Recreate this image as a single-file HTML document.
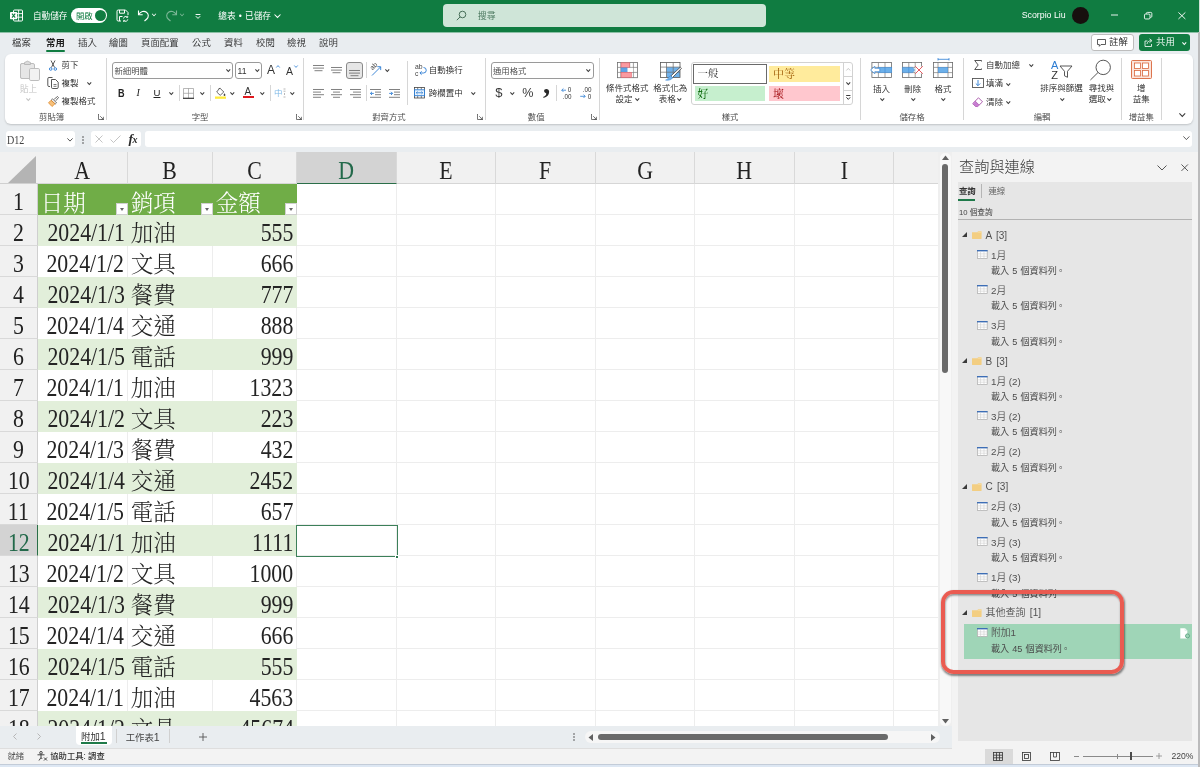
<!DOCTYPE html>
<html lang="zh-Hant"><head><meta charset="utf-8"><title>Excel</title>
<style>

*{box-sizing:border-box;margin:0;padding:0}
html,body{width:1200px;height:767px;overflow:hidden}
body{position:relative;background:#e9edf0;font-family:"Liberation Sans","Noto Sans CJK TC","Noto Sans CJK SC",sans-serif;font-size:9px;color:#242424;-webkit-font-smoothing:antialiased}
.a{position:absolute;white-space:nowrap}
.t{position:absolute;white-space:nowrap;line-height:12px;height:12px}
svg{position:absolute;overflow:visible}
#title{left:0;top:0;width:1200px;height:32px;background:#107c41;color:#fff}
#tabs{left:0;top:32px;width:1200px;height:22px}
#tabs .t{font-size:9.4px;color:#2e2e2e;top:5px;font-family:"Liberation Sans","Noto Sans CJK TC DemiLight","Noto Sans CJK TC","Noto Sans CJK SC",sans-serif}
#ribbon{left:5px;top:54px;width:1187.500px;height:70px;background:#fff;border-radius:6px;box-shadow:0 1px 2px rgba(0,0,0,.18)}
#rb .t{font-family:"Liberation Sans","Noto Sans CJK TC DemiLight","Noto Sans CJK TC","Noto Sans CJK SC",sans-serif}
#ribbon .gl{font-size:8.4px;color:#555}
.vsep{position:absolute;width:1px;background:#d6d6d6}
.chev{position:absolute;width:4px;height:4px;border-right:1px solid #444;border-bottom:1px solid #444;transform:rotate(45deg) scale(.8)}
#fbar{left:0;top:124px;width:1200px;height:28px}
.wbox{position:absolute;background:#fff;border-radius:3px}
#grid{left:0;top:152px;width:952px;height:574px;background:#fff;overflow:hidden}
.ch{position:absolute;top:0;height:32px;background:#f1f1f1;font-family:"Liberation Serif","Noto Serif CJK TC","Noto Serif CJK SC",serif;font-size:25.600px;line-height:38.300px;overflow:hidden;text-align:center;color:#222;border-right:1px solid #d9d9d9;border-bottom:1px solid #d6d6d6}
.rh{position:absolute;left:0;width:38px;height:31px;background:#f1f1f1;font-family:"Liberation Serif","Noto Serif CJK TC","Noto Serif CJK SC",serif;font-size:25.600px;line-height:36.100px;overflow:hidden;text-align:center;color:#222;border-bottom:1px solid #d9d9d9;border-right:1px solid #cfcfcf}
.c{position:absolute;height:31px;font-family:"Liberation Serif","Noto Serif CJK TC","Noto Serif CJK SC",serif;font-size:25.600px;line-height:36.100px;color:#242424;white-space:nowrap;overflow:hidden}
.band{background:#e2efda}
.hd{background:#70ad47;color:#fff;padding-top:1px}
.r{text-align:right;padding-right:4px}
.l{text-align:left;padding-left:2.800px}
.gv{position:absolute;top:32px;width:1px;height:542px;background:#ededed}
.gh{position:absolute;left:38px;height:1px;width:900px;background:#ededed}
.fb{position:absolute;width:12px;height:12px;background:#fff;border:1px solid #d0d0d0}
.fb:after{content:"";position:absolute;left:3px;top:4px;border-left:2.5px solid transparent;border-right:2.5px solid transparent;border-top:3px solid #666}
#pane{left:952px;top:152px;width:248px;height:597px;background:#f3f3f3}
#pin{position:absolute;left:6px;top:29.500px;width:234px;height:559px;background:#e6e6e6}
#pane .t{font-size:8.5px;color:#444}
#pane .nm{font-size:10px;color:#505050;font-family:"Liberation Sans","Noto Sans CJK TC DemiLight","Noto Sans CJK TC","Noto Sans CJK SC",sans-serif;line-height:14px;height:14px;word-spacing:1.500px}
#pane .sub{font-size:9.100px;color:#484848;word-spacing:.6px}
#sheetbar{left:0;top:726px;width:952px;height:22.500px;background:#e9edf0;border-bottom:1px solid #dedede}
#status{left:0;top:748.500px;width:1200px;height:15.500px;background:#f3f3f3}
#status .t{font-size:8.3px;color:#555}
#bstrip{left:0;top:764px;width:1200px;height:3px;background:#dde7f3;border-top:1px solid #c3ccd8}

.n{display:inline-block;transform:scaleX(.853);transform-origin:50% 50%}
.nr{transform-origin:100% 50%;position:absolute;right:3.400px;top:0}
.k{font-size:22.500px;line-height:37px;font-weight:300}
.wb{border-right:1px solid #ededed}
.dot{position:relative;top:-1.100px;left:.1px;font-size:80%}

</style></head>
<body>
<div id="wrap" style="position:absolute;left:0;top:0;width:1200px;height:767px;will-change:transform">
<div id="title" class="a">
<svg style="left:10px;top:9px" width="13" height="13" viewBox="0 0 13 13"><rect x="3.5" y="1" width="9" height="11" rx="1" fill="none" stroke="#fff" stroke-width="1"/><path d="M3.5 4.6h9M3.5 8.2h9M8.6 1v11" stroke="#fff" stroke-width=".9" fill="none"/><rect x="0" y="3" width="7.2" height="7.2" rx=".8" fill="#fff"/><path d="M2 4.6l3.2 4M5.2 4.6l-3.2 4" stroke="#107c41" stroke-width="1.1"/></svg>
<div class="t" style="left:33px;top:10px;font-size:8.6px">自動儲存</div>
<div class="a" style="left:71px;top:8px;width:36px;height:15px;border-radius:8px;background:#fff"></div><div class="t" style="left:76px;top:10px;font-size:8.4px;color:#107c41">開啟</div><div class="a" style="left:95px;top:10px;width:11px;height:11px;border-radius:6px;background:#107c41"></div>
<svg style="left:116px;top:9px" width="13" height="13" viewBox="0 0 13 13" fill="none" stroke="#fff" stroke-width="1"><path d="M5 12H2.2a1.2 1.2 0 0 1-1.2-1.2V2.2A1.2 1.2 0 0 1 2.200 1h7.3L12 3.500V6"/><path d="M3.500 1v3.200h5V1"/><path d="M3.500 12V7.500h3"/><path d="M7.500 9.500a2.300 2.300 0 0 1 4-1.300M11.800 10.300a2.300 2.300 0 0 1-4 1.300" stroke-width=".9"/><path d="M11.700 6.800v1.600h-1.600M7.600 13v-1.600h1.600" stroke-width=".8"/></svg>
<svg style="left:137px;top:9px" width="13" height="13" viewBox="0 0 13 13" fill="none" stroke="#fff" stroke-width="1.1"><path d="M1.500 1.500v4.200h4.200"/><path d="M1.800 5.500C3.500 2.500 7 1.500 9.500 3.200c2.400 1.700 2.300 5 .3 6.800L7.500 12"/></svg>
<div class="chev" style="left:152px;top:12px;border-color:#fff"></div>
<svg style="left:165px;top:9px;opacity:.45" width="13" height="13" viewBox="0 0 13 13" fill="none" stroke="#fff" stroke-width="1.1"><path d="M11.500 1.500v4.200H7.300"/><path d="M11.200 5.500C9.500 2.500 6 1.500 3.500 3.200c-2.400 1.700-2.300 5-.3 6.800L5.500 12"/></svg>
<div class="chev" style="left:180px;top:12px;border-color:#fff;opacity:.45"></div>
<svg style="left:194.500px;top:13.500px" width="6" height="5" viewBox="0 0 6 5" fill="none" stroke="#fff" stroke-width=".95"><path d="M.6.500h4.800M.8 2.200L3 4.400l2.200-2.200"/></svg>
<div class="t" style="left:218.300px;top:10px;font-size:8.700px;word-spacing:.7px">總表 • 已儲存</div>
<svg style="left:273.500px;top:13.800px" width="7" height="4.200" viewBox="0 0 7 4.200" fill="none" stroke="#fff" stroke-width="1.050"><path d="M.5.500L3.500 3.500 6.500.500"/></svg>
<div class="a" style="left:443px;top:4px;width:323px;height:23px;border-radius:4px;background:#cfe5d8"></div>
<svg style="left:456px;top:10px" width="11" height="11" viewBox="0 0 11 11" fill="none" stroke="#49705a" stroke-width="1"><circle cx="6.500" cy="4.500" r="3.300"/><path d="M4.200 6.800L.8 10.200"/></svg>
<div class="t" style="left:478px;top:10px;font-size:8.8px;color:#4d7a61">搜尋</div>
<div class="t" style="left:1021.700px;top:9.200px;font-size:8.800px;font-family:'Liberation Sans',sans-serif">Scorpio Liu</div>
<div class="a" style="left:1071.700px;top:6.800px;width:17px;height:17px;border-radius:9px;background:#17100e"></div>
<svg style="left:1110.500px;top:14.300px" width="7" height="2" viewBox="0 0 7 2"><path d="M0 1h7" stroke="#fff" stroke-width=".9"/></svg>
<svg style="left:1143.700px;top:12px" width="8.300" height="7.400" viewBox="0 0 9 9" preserveAspectRatio="none" fill="none" stroke="#fff" stroke-width="1"><rect x=".5" y="2.500" width="6" height="6" rx="1.200"/><path d="M2.500 2.300V1.700A1.200 1.200 0 0 1 3.700.500h3.600A1.200 1.200 0 0 1 8.500 1.700v3.600a1.200 1.200 0 0 1-1.200 1.200h-.6"/></svg>
<svg style="left:1177.500px;top:12px" width="7.800" height="7.400" viewBox="0 0 9 9" preserveAspectRatio="none" fill="none" stroke="#fff" stroke-width="1.100"><path d="M.5.500l8 8M8.500.500l-8 8"/></svg>
</div>
<div class="a" style="left:0;top:32px;width:1200px;height:1px;background:#8cc0a6"></div>
<div id="tabs" class="a">
<div class="t" style="left:12px;">檔案</div><div class="t" style="left:46px;font-weight:700;color:#1a1a1a;font-family:'Liberation Sans','Noto Sans CJK TC','Noto Sans CJK SC',sans-serif;">常用</div><div class="t" style="left:78px;">插入</div><div class="t" style="left:109px;">繪圖</div><div class="t" style="left:141px;">頁面配置</div><div class="t" style="left:192px;">公式</div><div class="t" style="left:224px;">資料</div><div class="t" style="left:256px;">校閱</div><div class="t" style="left:287px;">檢視</div><div class="t" style="left:319px;">說明</div>
<div class="a" style="left:46px;top:18px;width:19px;height:2px;background:#107c41;border-radius:1px"></div>
<div class="a" style="left:1091px;top:2px;width:43px;height:17px;border:1px solid #bdbdbd;border-radius:3px;background:#fff"></div><svg style="left:1097px;top:7px" width="9" height="8" viewBox="0 0 9 8" fill="none" stroke="#333" stroke-width=".8"><path d="M.5.500h8v5H4L2.300 7.300V5.500H.5z"/></svg><div class="t" style="left:1109px;top:4px;color:#222">註解</div>
<div class="a" style="left:1139px;top:2px;width:51px;height:17px;border-radius:3px;background:#107c41"></div><svg style="left:1144px;top:6px" width="9" height="9" viewBox="0 0 9 9" fill="none" stroke="#fff" stroke-width=".8"><path d="M3.500 3H1v5.500h6.500V6"/><path d="M3 6c.3-2 1.700-3.200 4-3.300M5.500.800L8 2.700 5.500 4.600"/></svg><div class="t" style="left:1156px;top:4px;color:#fff">共用</div><svg style="left:1181.700px;top:9.500px" width="4.600" height="3" viewBox="0 0 4.600 3" fill="none" stroke="#fff" stroke-width="1.050"><path d="M.4.400L2.300 2.500 4.200.400"/></svg>
</div>
<div id="ribbon" class="a"></div>
<div id="rb" class="a" style="left:0;top:0">
<svg style="left:20px;top:60px;" width="20" height="21" viewBox="0 0 20 21"><path d="M3.500 3.500H2a1.500 1.500 0 0 0-1.500 1.500v12A1.500 1.500 0 0 0 2 18.500h6" fill="#e6e6e6" stroke="#bcbcbc"/><rect x=".5" y="3.500" width="14" height="15" rx="1.500" fill="#e6e6e6" stroke="#bdbdbd"/><path d="M4.500 4.500V3a1 1 0 0 1 1-1h.7a1.400 1.400 0 0 1 2.600 0h.7a1 1 0 0 1 1 1v1.500z" fill="#dcdcdc" stroke="#b8b8b8"/><rect x="9.500" y="8.500" width="10" height="12" rx="1.300" fill="#f2f2f2" stroke="#bdbdbd"/></svg><div class="t" style="left:20px;top:82.5px;font-size:8.6px;color:#c2c2c2;">貼上</div><svg style="left:26.4px;top:98.15px" width="4.6" height="2.9" viewBox="0 0 4.6 2.9" fill="none" stroke="#c2c2c2" stroke-width="1.05"><path d="M.4.400L2.3 2.5L4.2 .4"/></svg><svg style="left:49px;top:60px;" width="8" height="11" viewBox="0 0 8 11"><path d="M2 .5l3.600 7M6 .5L2.400 7.500" stroke="#444" stroke-width=".9" fill="none"/><circle cx="1.700" cy="9" r="1.300" fill="none" stroke="#2b7cd3" stroke-width=".9"/><circle cx="6.300" cy="9" r="1.300" fill="none" stroke="#2b7cd3" stroke-width=".9"/></svg><div class="t" style="left:61.6px;top:58.7px;font-size:8.5px;color:#262626;">剪下</div><svg style="left:47px;top:77px;" width="12" height="12" viewBox="0 0 12 12"><path d="M3 9.500H2a1.200 1.200 0 0 1-1.200-1.200V1.700A1.200 1.200 0 0 1 2 .5h3.500" fill="none" stroke="#444" stroke-width=".9"/><path d="M4.500 2.500h4l2.700 2.700v5.100a1.200 1.200 0 0 1-1.200 1.200H5.700a1.200 1.200 0 0 1-1.200-1.200z" fill="#fff" stroke="#444" stroke-width=".9"/><path d="M6.500 7.500h3M6.500 9.300h3" stroke="#444" stroke-width=".7"/></svg><div class="t" style="left:61.6px;top:77px;font-size:8.5px;color:#262626;">複製</div><svg style="left:86.7px;top:82.05px" width="4.6" height="2.9" viewBox="0 0 4.6 2.9" fill="none" stroke="#3a3a3a" stroke-width="1.05"><path d="M.4.400L2.3 2.5L4.2 .4"/></svg><svg style="left:48px;top:96px;" width="11" height="11" viewBox="0 0 11 11"><path d="M6.200 3.200L9.500.5l1 1-2.700 3.300" fill="#fff" stroke="#444" stroke-width=".8"/><path d="M4.500 2.800l4 4-1.300 1.300-4-4z" fill="#fff" stroke="#444" stroke-width=".8"/><path d="M3 4.300L.5 6.800 4 10.500l3-2.800z" fill="#f6c07a" stroke="#e08a2c" stroke-width=".8"/></svg><div class="t" style="left:61.6px;top:95.3px;font-size:8.5px;color:#262626;">複製格式</div><div class="t" style="left:11.6px;width:80px;text-align:center;top:110.7px;font-size:8.4px;color:#444;">剪貼簿</div><svg style="left:98px;top:114px;" width="6" height="6" viewBox="0 0 6 6"><path d="M.5 0v5.500H6M.5.500H0M2.200 2.200l3 3M5.400 2.800v2.600H2.800" fill="none" stroke="#555" stroke-width=".8"/></svg><div class="vsep" style="left:106px;top:57.5px;height:62px;background:#d6d6d6"></div><div class="a" style="left:112.300px;top:62px;width:120.400px;height:16.700px;border:1px solid #9a9a9a;border-radius:3px;background:#fff"></div><div class="t" style="left:114.5px;top:64.5px;font-size:8.4px;color:#444;">新細明體</div><svg style="left:225.7px;top:69.35px" width="4.6" height="2.9" viewBox="0 0 4.6 2.9" fill="none" stroke="#3a3a3a" stroke-width="1.05"><path d="M.4.400L2.3 2.5L4.2 .4"/></svg><div class="a" style="left:235px;top:62px;width:27px;height:16.700px;border:1px solid #9a9a9a;border-radius:3px;background:#fff"></div><div class="t" style="left:237.5px;top:64.5px;font-size:8.6px;color:#333;">11</div><svg style="left:254.7px;top:69.35px" width="4.6" height="2.9" viewBox="0 0 4.6 2.9" fill="none" stroke="#3a3a3a" stroke-width="1.05"><path d="M.4.400L2.3 2.5L4.2 .4"/></svg><div class="t" style="left:267px;top:64px;font-size:12px;color:#333;">A</div><svg style="left:275.5px;top:64.5px;" width="4" height="3" viewBox="0 0 4 3"><path d="M.3 2.500L2 .6l1.700 1.900" fill="none" stroke="#2b7cd3" stroke-width=".8"/></svg><div class="t" style="left:286px;top:64.6px;font-size:10.5px;color:#333;">A</div><svg style="left:293.5px;top:64.5px;" width="4" height="3" viewBox="0 0 4 3"><path d="M.3.500L2 2.400 3.700.500" fill="none" stroke="#2b7cd3" stroke-width=".8"/></svg><div class="t" style="left:118px;top:86.7px;font-size:10.6px;color:#222;font-weight:700;font-family:'Liberation Sans',sans-serif"><span style="display:inline-block;transform:scaleX(.86);transform-origin:0 50%">B</span></div><div class="t" style="left:136.5px;top:87px;font-size:10px;color:#222;font-style:italic;font-family:'Liberation Serif',serif">I</div><div class="t" style="left:153.5px;top:87px;font-size:9.6px;color:#222;text-decoration:underline">U</div><svg style="left:168.7px;top:92.05px" width="4.6" height="2.9" viewBox="0 0 4.6 2.9" fill="none" stroke="#3a3a3a" stroke-width="1.05"><path d="M.4.400L2.3 2.5L4.2 .4"/></svg><div class="vsep" style="left:178.5px;top:85px;height:16px;background:#d6d6d6"></div><svg style="left:183px;top:87.5px;" width="11" height="11" viewBox="0 0 11 11"><path d="M.5 10V.5h10V10M5.500 .5v9.500M.5 5.300h10" fill="none" stroke="#9a9a9a" stroke-width=".7"/><path d="M0 10.300h11" stroke="#333" stroke-width="1.200"/></svg><svg style="left:199.7px;top:92.05px" width="4.6" height="2.9" viewBox="0 0 4.6 2.9" fill="none" stroke="#3a3a3a" stroke-width="1.05"><path d="M.4.400L2.3 2.5L4.2 .4"/></svg><div class="vsep" style="left:209.5px;top:85px;height:16px;background:#d6d6d6"></div><svg style="left:214.5px;top:86.5px;" width="11" height="12" viewBox="0 0 11 12"><path d="M4.800 1l4 4-3.600 3.300L1.700 5z" fill="#fff" stroke="#444" stroke-width=".8"/><path d="M3.500 2.200l1.300-1.300" stroke="#444" stroke-width=".8"/><path d="M9.500 6.200c.6.900.9 1.400.9 1.900a.9.900 0 0 1-1.800 0c0-.5.300-1 .9-1.900z" fill="#444"/><rect x="0" y="9.500" width="11" height="2.300" fill="#ffeb3b"/></svg><svg style="left:230.2px;top:92.05px" width="4.6" height="2.9" viewBox="0 0 4.6 2.9" fill="none" stroke="#3a3a3a" stroke-width="1.05"><path d="M.4.400L2.3 2.5L4.2 .4"/></svg><div class="t" style="left:244.5px;top:85.5px;font-size:10px;color:#333;">A</div><div class="a" style="left:243px;top:96px;width:11px;height:2.300px;background:#e0191e"></div><svg style="left:259.7px;top:92.05px" width="4.6" height="2.9" viewBox="0 0 4.6 2.9" fill="none" stroke="#3a3a3a" stroke-width="1.05"><path d="M.4.400L2.3 2.5L4.2 .4"/></svg><div class="vsep" style="left:269.5px;top:85px;height:16px;background:#d6d6d6"></div><div class="t" style="left:274px;top:87px;font-size:8.5px;color:#79b6e6;">中</div><svg style="left:283px;top:87.5px;" width="3" height="10" viewBox="0 0 3 10"><path d="M.5 1h2M.5 3.200h2M1.500 5v2M.5 9h2" stroke="#9a9a9a" stroke-width=".7"/></svg><svg style="left:290.2px;top:92.05px" width="4.6" height="2.9" viewBox="0 0 4.6 2.9" fill="none" stroke="#3a3a3a" stroke-width="1.05"><path d="M.4.400L2.3 2.5L4.2 .4"/></svg><div class="t" style="left:160px;width:80px;text-align:center;top:110.7px;font-size:8.4px;color:#444;">字型</div><svg style="left:296px;top:114px;" width="6" height="6" viewBox="0 0 6 6"><path d="M.5 0v5.500H6M.5.500H0M2.200 2.200l3 3M5.400 2.800v2.600H2.800" fill="none" stroke="#555" stroke-width=".8"/></svg><div class="vsep" style="left:303px;top:57.5px;height:62px;background:#d6d6d6"></div><svg style="left:313px;top:64.5px;" width="11" height="7.8" viewBox="0 0 11 7.8"><path d="M0 0.5h11" stroke="#6a6a6a" stroke-width=".85"/><path d="M0 3.1h11" stroke="#6a6a6a" stroke-width=".85"/><path d="M1.5 5.7h8" stroke="#6a6a6a" stroke-width=".85"/></svg><svg style="left:331px;top:67px;" width="11" height="7.8" viewBox="0 0 11 7.8"><path d="M0 0.5h11" stroke="#6a6a6a" stroke-width=".85"/><path d="M0 3.1h11" stroke="#6a6a6a" stroke-width=".85"/><path d="M1.5 5.7h8" stroke="#6a6a6a" stroke-width=".85"/></svg><div class="a" style="left:346px;top:62px;width:17px;height:17px;border:1px solid #8a8a8a;border-radius:3px;background:#e6e6e6"></div><svg style="left:349px;top:69.5px;" width="11" height="7.8" viewBox="0 0 11 7.8"><path d="M0 0.5h11" stroke="#6a6a6a" stroke-width=".85"/><path d="M0 3.1h11" stroke="#6a6a6a" stroke-width=".85"/><path d="M1.5 5.7h8" stroke="#6a6a6a" stroke-width=".85"/></svg><div class="vsep" style="left:365.5px;top:62px;height:16px;background:#d6d6d6"></div><svg style="left:370px;top:63.5px;" width="12" height="12" viewBox="0 0 12 12"><text x="0" y="0" font-size="6.800" font-family="Liberation Sans" fill="#444" transform="translate(2.500 6.500) rotate(-45)">ab</text><path d="M2 11.500L10.500 3" stroke="#2b7cd3" stroke-width=".9" fill="none"/><path d="M7.300 2.700h3.400v3.400" stroke="#2b7cd3" stroke-width=".9" fill="none"/></svg><svg style="left:385.2px;top:69.05px" width="4.6" height="2.9" viewBox="0 0 4.6 2.9" fill="none" stroke="#3a3a3a" stroke-width="1.05"><path d="M.4.400L2.3 2.5L4.2 .4"/></svg><svg style="left:313px;top:88.5px;" width="11" height="10.4" viewBox="0 0 11 10.4"><path d="M0 0.5h11" stroke="#6a6a6a" stroke-width=".85"/><path d="M0 3.1h8" stroke="#6a6a6a" stroke-width=".85"/><path d="M0 5.7h11" stroke="#6a6a6a" stroke-width=".85"/><path d="M0 8.3h8" stroke="#6a6a6a" stroke-width=".85"/></svg><svg style="left:331px;top:88.5px;" width="11" height="10.4" viewBox="0 0 11 10.4"><path d="M0 0.5h11" stroke="#6a6a6a" stroke-width=".85"/><path d="M2 3.1h7" stroke="#6a6a6a" stroke-width=".85"/><path d="M0 5.7h11" stroke="#6a6a6a" stroke-width=".85"/><path d="M2 8.3h7" stroke="#6a6a6a" stroke-width=".85"/></svg><svg style="left:349.5px;top:88.5px;" width="11" height="10.4" viewBox="0 0 11 10.4"><path d="M0 0.5h11" stroke="#6a6a6a" stroke-width=".85"/><path d="M3 3.1h8" stroke="#6a6a6a" stroke-width=".85"/><path d="M0 5.7h11" stroke="#6a6a6a" stroke-width=".85"/><path d="M3 8.3h8" stroke="#6a6a6a" stroke-width=".85"/></svg><div class="vsep" style="left:365.5px;top:85px;height:16px;background:#d6d6d6"></div><svg style="left:370px;top:88.5px;" width="11" height="9" viewBox="0 0 11 9"><path d="M0 .5h11M5 3.100h6M5 5.700h6M0 8.300h11" stroke="#6a6a6a" stroke-width=".85"/><path d="M3.800 4.400H.5M2 2.800L.4 4.400 2 6" stroke="#2b7cd3" stroke-width=".9" fill="none"/></svg><svg style="left:388.5px;top:88.5px;" width="11" height="9" viewBox="0 0 11 9"><path d="M0 .5h11M5 3.100h6M5 5.700h6M0 8.300h11" stroke="#6a6a6a" stroke-width=".85"/><path d="M.2 4.400h3.300M2 2.800l1.600 1.600L2 6" stroke="#2b7cd3" stroke-width=".9" fill="none"/></svg><div class="vsep" style="left:406.5px;top:61px;height:43.5px;background:#d6d6d6"></div><svg style="left:415px;top:64px;" width="11" height="12" viewBox="0 0 11 12"><text x="0" y="5" font-size="6.800" font-family="Liberation Sans" fill="#444">ab</text><text x="0" y="11.500" font-size="6.800" font-family="Liberation Sans" fill="#444">c</text><path d="M8.500 3.500a2.600 2.600 0 0 1 0 5.500H5M6.600 7.300L4.900 9l1.700 1.700" stroke="#2b7cd3" stroke-width=".9" fill="none"/></svg><div class="t" style="left:428.7px;top:64px;font-size:8.5px;color:#262626;">自動換行</div><svg style="left:414px;top:86.7px;" width="11" height="11.5" viewBox="0 0 11 11.5"><rect x=".5" y=".5" width="10" height="10.500" fill="#fff" stroke="#444" stroke-width=".8"/><path d="M3.700 .5v2.300M7.300 .5v2.300M3.700 8.700V11M7.300 8.700V11" stroke="#444" stroke-width=".7"/><rect x=".5" y="2.800" width="10" height="5.900" fill="#eaf3fc" stroke="#2b7cd3" stroke-width=".9"/><path d="M2.300 5.750h6.400M3.600 4.500L2.300 5.750l1.300 1.250M7.400 4.500l1.300 1.250-1.300 1.250" stroke="#2b7cd3" stroke-width=".8" fill="none"/></svg><div class="t" style="left:428.7px;top:86.5px;font-size:8.5px;color:#262626;">跨欄置中</div><svg style="left:470.7px;top:92.05px" width="4.6" height="2.9" viewBox="0 0 4.6 2.9" fill="none" stroke="#3a3a3a" stroke-width="1.05"><path d="M.4.400L2.3 2.5L4.2 .4"/></svg><div class="t" style="left:349px;width:80px;text-align:center;top:110.7px;font-size:8.4px;color:#444;">對齊方式</div><svg style="left:476.5px;top:114px;" width="6" height="6" viewBox="0 0 6 6"><path d="M.5 0v5.500H6M.5.500H0M2.200 2.200l3 3M5.400 2.800v2.600H2.800" fill="none" stroke="#555" stroke-width=".8"/></svg><div class="vsep" style="left:484.5px;top:57.5px;height:62px;background:#d6d6d6"></div><div class="a" style="left:490.500px;top:62px;width:103.300px;height:16.700px;border:1px solid #9a9a9a;border-radius:3px;background:#fff"></div><div class="t" style="left:493px;top:64.5px;font-size:8.4px;color:#444;">通用格式</div><svg style="left:586.4px;top:69.35px" width="4.6" height="2.9" viewBox="0 0 4.6 2.9" fill="none" stroke="#3a3a3a" stroke-width="1.05"><path d="M.4.400L2.3 2.5L4.2 .4"/></svg><div class="t" style="left:495.3px;top:86.5px;font-size:13px;color:#3a3a3a;">$</div><svg style="left:510.2px;top:92.05px" width="4.6" height="2.9" viewBox="0 0 4.6 2.9" fill="none" stroke="#3a3a3a" stroke-width="1.05"><path d="M.4.400L2.3 2.5L4.2 .4"/></svg><div class="t" style="left:522.3px;top:86.5px;font-size:12.6px;color:#3a3a3a;">%</div><svg style="left:543px;top:86px;" width="8" height="13" viewBox="0 0 8 13"><text x="0" y="6.800" font-size="29" font-weight="700" font-family="Liberation Serif" fill="#2a2a2a">,</text></svg><div class="vsep" style="left:556px;top:85px;height:16px;background:#d6d6d6"></div><svg style="left:561px;top:86.5px;" width="12" height="12" viewBox="0 0 12 12"><text x="6.800" y="5.300" font-size="6.300" font-family="Liberation Sans" fill="#333">0</text><text x="1.800" y="11.500" font-size="6.300" font-family="Liberation Sans" fill="#333">.00</text><path d="M5 3.200H.8M2.400 1.500L.7 3.200l1.700 1.700" stroke="#2b7cd3" stroke-width=".8" fill="none"/></svg><svg style="left:579.5px;top:86.5px;" width="12" height="12" viewBox="0 0 12 12"><text x="2.700" y="5.300" font-size="6.300" font-family="Liberation Sans" fill="#333">.00</text><text x="7.700" y="11.500" font-size="6.300" font-family="Liberation Sans" fill="#333">0</text><path d="M.2 9.300h5M3.500 7.600l1.700 1.700-1.700 1.700" stroke="#2b7cd3" stroke-width=".8" fill="none"/></svg><div class="t" style="left:496.2px;width:80px;text-align:center;top:110.7px;font-size:8.4px;color:#444;">數值</div><svg style="left:591px;top:114px;" width="6" height="6" viewBox="0 0 6 6"><path d="M.5 0v5.500H6M.5.500H0M2.200 2.200l3 3M5.400 2.800v2.600H2.800" fill="none" stroke="#555" stroke-width=".8"/></svg><div class="vsep" style="left:599px;top:57.5px;height:62px;background:#d6d6d6"></div><svg style="left:617.3px;top:62px;" width="21" height="16" viewBox="0 0 21 16"><rect x=".4" y=".4" width="20" height="15.300" fill="#fff" stroke="#6e6e6e" stroke-width=".8"/><path d="M3.800 .4v15.300M12.700 .4v15.300M16.400 .4v15.300M.4 5.400h20M.4 10.400h20" stroke="#7a7a7a" stroke-width=".7" fill="none"/><rect x="4.100" y=".8" width="8.600" height="4.600" fill="#fb9aa0" stroke="#e4606a" stroke-width=".6"/><rect x="4.100" y="5.900" width="6.200" height="4" fill="#5fa4e6" stroke="#3f8ad6" stroke-width=".5"/><rect x="10.600" y="5.900" width="5.600" height="4" fill="#fff"/><rect x="4.100" y="10.400" width="10.200" height="4.900" fill="#fb9aa0" stroke="#e4606a" stroke-width=".6"/></svg><div class="t" style="left:587.3px;width:80px;text-align:center;top:82px;font-size:8.5px;color:#262626;">條件式格式</div><div class="t" style="left:615.5px;top:92.7px;font-size:8.5px;color:#262626;">設定</div><svg style="left:634.7px;top:97.85px" width="4.6" height="2.9" viewBox="0 0 4.6 2.9" fill="none" stroke="#3a3a3a" stroke-width="1.05"><path d="M.4.400L2.3 2.5L4.2 .4"/></svg><svg style="left:660px;top:62.3px;" width="22" height="19" viewBox="0 0 22 19"><rect x="6.300" y="5.100" width="13.700" height="10.300" fill="#6fb1ea"/><rect x=".4" y=".4" width="19.600" height="15" fill="none" stroke="#555" stroke-width=".8"/><path d="M6.500 .4v15M13.200 .4v15M.4 5.100h19.600M.4 10.200h19.600" stroke="#6a6a6a" stroke-width=".7" fill="none"/><path d="M20.300 5.200l1.200 1.100-9 9.300-1.700-1.600z" fill="#fff" stroke="#444" stroke-width=".8"/><path d="M10.600 13.800l2 2c-.8 1.800-3.600 2.800-7 2.300 1.800-.6 2.700-1.500 3.300-3.200z" fill="#6fb1ea" stroke="#3f8ad6" stroke-width=".6"/></svg><div class="t" style="left:630.2px;width:80px;text-align:center;top:82px;font-size:8.5px;color:#262626;">格式化為</div><div class="t" style="left:658.7px;top:92.7px;font-size:8.5px;color:#262626;">表格</div><svg style="left:677.2px;top:97.85px" width="4.6" height="2.9" viewBox="0 0 4.6 2.9" fill="none" stroke="#3a3a3a" stroke-width="1.05"><path d="M.4.400L2.3 2.5L4.2 .4"/></svg><div class="a" style="left:691px;top:62px;width:161.500px;height:43.300px;border:1px solid #d2d2d2;border-radius:3px;background:#fff"></div><div class="a" style="left:692.500px;top:64.200px;width:74.300px;height:19.600px;border:1.400px solid #6a6a6a;background:#fff"></div><div class="t" style="left:697.5px;top:67.5px;font-size:10.4px;color:#333;font-family:'Liberation Serif','Noto Serif CJK TC','Noto Serif CJK SC',serif">一般</div><div class="a" style="left:769px;top:66.200px;width:71px;height:15.600px;background:#ffeb9c"></div><div class="t" style="left:773px;top:67.5px;font-size:11px;color:#9c5700;font-family:'Liberation Serif','Noto Serif CJK TC','Noto Serif CJK SC',serif">中等</div><div class="a" style="left:694.500px;top:86px;width:70.500px;height:15.400px;background:#c6efce"></div><div class="t" style="left:697.5px;top:87.5px;font-size:11px;color:#006100;font-family:'Liberation Serif','Noto Serif CJK TC','Noto Serif CJK SC',serif">好</div><div class="a" style="left:769px;top:86px;width:71px;height:15.400px;background:#ffc7ce"></div><div class="t" style="left:773px;top:87.5px;font-size:11px;color:#9c0006;font-family:'Liberation Serif','Noto Serif CJK TC','Noto Serif CJK SC',serif">壞</div><div class="vsep" style="left:843px;top:62.5px;height:42.5px;background:#d2d2d2"></div><div class="a" style="left:843px;top:76px;width:9px;height:1px;background:#d2d2d2"></div><div class="a" style="left:843px;top:90px;width:9px;height:1px;background:#d2d2d2"></div><svg style="left:845.7px;top:68px;" width="4.6" height="2.9" viewBox="0 0 4.6 2.9"><path d="M.4 2.500L2.300.400l1.900 2.100" fill="none" stroke="#c4c4c4" stroke-width=".9"/></svg><svg style="left:845.7px;top:81.85px" width="4.6" height="2.9" viewBox="0 0 4.6 2.9" fill="none" stroke="#3a3a3a" stroke-width="1.05"><path d="M.4.400L2.3 2.5L4.2 .4"/></svg><svg style="left:845.7px;top:94.8px;" width="4.6" height="5" viewBox="0 0 4.6 5"><path d="M.2.500h4.200M.4 2.300L2.300 4.400l1.900-2.100" fill="none" stroke="#3a3a3a" stroke-width="1"/></svg><div class="t" style="left:690px;width:80px;text-align:center;top:110.7px;font-size:8.4px;color:#444;">樣式</div><div class="vsep" style="left:860px;top:57.5px;height:62px;background:#d6d6d6"></div><svg style="left:868.5px;top:62px;" width="23" height="16" viewBox="0 0 23 16"><rect x="2.900" y=".4" width="19.600" height="15.200" fill="#fff" stroke="#6a6a6a" stroke-width=".8"/><path d="M9.400 .4v15.200M16 .4v15.200M2.900 5.400h19.600M2.900 10.600h19.600" stroke="#7a7a7a" stroke-width=".7" fill="none"/><rect x="9" y="5.400" width="13.800" height="5.200" fill="#6cb0ea" stroke="#3f8ad6" stroke-width=".5"/><path d="M16 5.400v5.200" stroke="#3f8ad6" stroke-width=".6"/><path d="M5.800 4.300L1.600 8l4.200 3.700V9.700h5V6.300h-5z" fill="#fff" stroke="#3f8ad6" stroke-width=".8" stroke-linejoin="round"/></svg><div class="t" style="left:841.6px;width:80px;text-align:center;top:82.7px;font-size:8.5px;color:#262626;">插入</div><svg style="left:879.7px;top:97.95px" width="4.6" height="2.9" viewBox="0 0 4.6 2.9" fill="none" stroke="#3a3a3a" stroke-width="1.05"><path d="M.4.400L2.3 2.5L4.2 .4"/></svg><svg style="left:902.2px;top:62px;" width="22" height="16" viewBox="0 0 22 16"><rect x=".4" y=".4" width="19.200" height="15.200" fill="#fff" stroke="#6a6a6a" stroke-width=".8"/><path d="M6.800 .4v15.200M13.200 .4v15.200M.4 5.400h19.200M.4 10.600h19.200" stroke="#7a7a7a" stroke-width=".7" fill="none"/><rect x="13.400" y="4.500" width="7" height="7" fill="#fff"/><path d="M.4 5.400h10.200l2 2.600-2 2.600H.4z" fill="#6cb0ea" stroke="#3f8ad6" stroke-width=".5"/><path d="M6.800 5.400v5.200" stroke="#3f8ad6" stroke-width=".6"/><path d="M13.200 4.200l7.600 7.600M20.800 4.200l-7.600 7.600" stroke="#e4474d" stroke-width=".9"/></svg><div class="t" style="left:872.5px;width:80px;text-align:center;top:82.7px;font-size:8.5px;color:#262626;">刪除</div><svg style="left:910.7px;top:97.95px" width="4.6" height="2.9" viewBox="0 0 4.6 2.9" fill="none" stroke="#3a3a3a" stroke-width="1.05"><path d="M.4.400L2.3 2.5L4.2 .4"/></svg><svg style="left:933.2px;top:58px;" width="20" height="20" viewBox="0 0 20 20"><path d="M5 1.300h11M5 .1v2.400M16 .1v2.400" stroke="#2b7cd3" stroke-width=".8"/><rect x=".4" y="4.400" width="19.200" height="15.200" fill="#fff" stroke="#6a6a6a" stroke-width=".8"/><path d="M5 4.400v15.200M15 4.400v15.200M.4 9.400h19.200M.4 14.600h19.200" stroke="#7a7a7a" stroke-width=".7" fill="none"/><rect x="5.200" y="9.400" width="9.600" height="5.200" fill="#6cb0ea" stroke="#3f8ad6" stroke-width=".5"/></svg><div class="t" style="left:903px;width:80px;text-align:center;top:82.7px;font-size:8.5px;color:#262626;">格式</div><svg style="left:940.7px;top:97.95px" width="4.6" height="2.9" viewBox="0 0 4.6 2.9" fill="none" stroke="#3a3a3a" stroke-width="1.05"><path d="M.4.400L2.3 2.5L4.2 .4"/></svg><div class="t" style="left:872px;width:80px;text-align:center;top:110.7px;font-size:8.4px;color:#444;">儲存格</div><div class="vsep" style="left:963px;top:57.5px;height:62px;background:#d6d6d6"></div><svg style="left:973.5px;top:60px;" width="8" height="10" viewBox="0 0 8 10"><path d="M7.500 1.500V.5H.7l3.500 4.500L.7 9.500h6.800v-1" fill="none" stroke="#444" stroke-width=".9"/></svg><div class="t" style="left:986px;top:59px;font-size:8.5px;color:#262626;">自動加總</div><svg style="left:1028.7px;top:64.05px" width="4.6" height="2.9" viewBox="0 0 4.6 2.9" fill="none" stroke="#3a3a3a" stroke-width="1.05"><path d="M.4.400L2.3 2.5L4.2 .4"/></svg><svg style="left:972px;top:78px;" width="12" height="10" viewBox="0 0 12 10"><rect x=".5" y=".5" width="11" height="9" fill="#fff" stroke="#555" stroke-width=".9"/><path d="M6 2v5.500M3.800 5.500L6 7.700l2.200-2.200" fill="none" stroke="#2b7cd3" stroke-width=".9"/></svg><div class="t" style="left:986px;top:77.3px;font-size:8.5px;color:#262626;">填滿</div><svg style="left:1005.7px;top:82.55px" width="4.6" height="2.9" viewBox="0 0 4.6 2.9" fill="none" stroke="#3a3a3a" stroke-width="1.05"><path d="M.4.400L2.3 2.5L4.2 .4"/></svg><svg style="left:972px;top:96.5px;" width="11" height="10" viewBox="0 0 11 10"><path d="M6.500 .8l4 4-4.800 4.700H3.500L.7 6.600z" fill="#fff" stroke="#a349a4" stroke-width=".9"/><path d="M3.200 4.100l4 4" stroke="#a349a4" stroke-width=".9"/><path d="M.9 6.700l2.400-2.500 3.800 3.900-1.400 1.400H3.500z" fill="#c77dd1"/></svg><div class="t" style="left:986px;top:95.7px;font-size:8.5px;color:#262626;">清除</div><svg style="left:1005.7px;top:100.85px" width="4.6" height="2.9" viewBox="0 0 4.6 2.9" fill="none" stroke="#3a3a3a" stroke-width="1.05"><path d="M.4.400L2.3 2.5L4.2 .4"/></svg><svg style="left:1051px;top:60px;" width="22" height="19" viewBox="0 0 22 19"><text x="0" y="8.500" font-size="11" font-family="Liberation Sans" fill="#2b7cd3">A</text><text x="0.300" y="18.500" font-size="11" font-family="Liberation Sans" fill="#333">Z</text><path d="M9 6h12l-4.500 5.300v6l-3-1.500v-4.500z" fill="#fff" stroke="#444" stroke-width=".9"/></svg><div class="t" style="left:1021.5px;width:80px;text-align:center;top:82px;font-size:8.5px;color:#262626;">排序與篩選</div><svg style="left:1059.7px;top:97.85px" width="4.6" height="2.9" viewBox="0 0 4.6 2.9" fill="none" stroke="#3a3a3a" stroke-width="1.05"><path d="M.4.400L2.3 2.5L4.2 .4"/></svg><svg style="left:1090px;top:60px;" width="21" height="21" viewBox="0 0 21 21"><circle cx="13.200" cy="7.400" r="7.200" fill="#fff" stroke="#444" stroke-width=".9"/><path d="M8 12.500L.4 20" stroke="#444" stroke-width=".9"/></svg><div class="t" style="left:1088.7px;top:82px;font-size:8.5px;color:#262626;">尋找與</div><div class="t" style="left:1088.7px;top:92.7px;font-size:8.5px;color:#262626;">選取</div><svg style="left:1107.2px;top:97.85px" width="4.6" height="2.9" viewBox="0 0 4.6 2.9" fill="none" stroke="#3a3a3a" stroke-width="1.05"><path d="M.4.400L2.3 2.5L4.2 .4"/></svg><div class="t" style="left:1002px;width:80px;text-align:center;top:110.7px;font-size:8.4px;color:#444;">編輯</div><div class="vsep" style="left:1120.5px;top:57.5px;height:62px;background:#d6d6d6"></div><svg style="left:1130.5px;top:60px;" width="21" height="19" viewBox="0 0 21 19"><rect x=".5" y=".5" width="20" height="18" rx="1" fill="#fbe5dc" stroke="#d9663c" stroke-width=".9"/><rect x="3.500" y="3" width="6" height="5.500" fill="#fff" stroke="#d9663c" stroke-width=".8"/><rect x="11.500" y="3" width="6" height="5.500" fill="#fff" stroke="#d9663c" stroke-width=".8"/><rect x="3.500" y="10.500" width="6" height="5.500" fill="#fff" stroke="#d9663c" stroke-width=".8"/><rect x="11.500" y="10.500" width="6" height="5.500" fill="#fff" stroke="#d9663c" stroke-width=".8"/></svg><div class="t" style="left:1101.3px;width:80px;text-align:center;top:82px;font-size:8.5px;color:#262626;">增</div><div class="t" style="left:1101.3px;width:80px;text-align:center;top:92.7px;font-size:8.5px;color:#262626;">益集</div><div class="t" style="left:1101.3px;width:80px;text-align:center;top:110.7px;font-size:8.4px;color:#444;">增益集</div><div class="vsep" style="left:1161px;top:57.5px;height:62px;background:#d6d6d6"></div><svg style="left:1179.4px;top:113.1px" width="6.6" height="3.8" viewBox="0 0 6.6 3.8" fill="none" stroke="#3a3a3a" stroke-width="1.05"><path d="M.4.400L3.3 3.4L6.2 .4"/></svg></div>
<div id="fbar" class="a"><div class="wbox" style="left:6px;top:7px;width:69px;height:16px"></div><div class="t" style="left:7px;top:7.500px;font-size:13.300px;color:#444;font-family:'Liberation Serif',serif;line-height:16px;height:16px"><span style="display:inline-block;transform:scaleX(.76);transform-origin:0 50%">D12</span></div><svg style="left:66.5px;top:13.75px" width="6" height="3.5" viewBox="0 0 6 3.5" fill="none" stroke="#444" stroke-width="0.9"><path d="M.4.400L3 3.1L5.6 .4"/></svg><svg style="left:82px;top:11.500px" width="2" height="8" viewBox="0 0 2 8"><circle cx="1" cy="1" r=".8" fill="#444"/><circle cx="1" cy="4" r=".8" fill="#444"/><circle cx="1" cy="7" r=".8" fill="#444"/></svg><div class="wbox" style="left:91px;top:7px;width:50px;height:16px"></div><svg style="left:95px;top:11px" width="8" height="8" viewBox="0 0 8 8"><path d="M.5.500l7 7M7.500.500l-7 7" stroke="#b5b5b5" stroke-width=".8"/></svg><svg style="left:110px;top:11px" width="11" height="8" viewBox="0 0 11 8"><path d="M.5 4.500l3 3 7-7" fill="none" stroke="#b5b5b5" stroke-width=".8"/></svg><div class="t" style="left:128.500px;top:7px;font-size:13.500px;color:#2a2a2a;font-style:italic;font-weight:700;font-family:'Liberation Serif',serif;line-height:15px;height:15px">f<span style="font-size:10px;position:relative;left:-.5px">x</span></div><div class="wbox" style="left:145px;top:7px;width:1047px;height:16px"></div><svg style="left:1183px;top:12.2px" width="6.8" height="4" viewBox="0 0 6.8 4" fill="none" stroke="#444" stroke-width="0.85"><path d="M.4.400L3.4 3.6L6.4 .4"/></svg></div>
<div id="grid" class="a">
<div class="a" style="left:0;top:0;width:938px;height:32px;background:#f1f1f1;border-bottom:1px solid #d0d0d0"></div><div class="a" style="left:0;top:32px;width:38px;height:542px;background:#f1f1f1;border-right:1px solid #d0d0d0"></div>
<svg style="left:8px;top:4px" width="28" height="27" viewBox="0 0 28 27"><path d="M28 0v27H0z" fill="#b4b4b4"/></svg>
<div class="ch" style="left:38px;width:90px;"><span class="n">A</span></div><div class="ch" style="left:128px;width:85px;"><span class="n">B</span></div><div class="ch" style="left:213px;width:84px;"><span class="n">C</span></div><div class="ch" style="left:297px;width:100px;background:#d3d3d3;color:#22694a;border-bottom:1.500px solid #2a6e48;"><span class="n">D</span></div><div class="ch" style="left:397px;width:99px;"><span class="n">E</span></div><div class="ch" style="left:496px;width:100px;"><span class="n">F</span></div><div class="ch" style="left:596px;width:99px;"><span class="n">G</span></div><div class="ch" style="left:695px;width:100px;"><span class="n">H</span></div><div class="ch" style="left:795px;width:99px;"><span class="n">I</span></div><div class="ch" style="left:894px;width:44px;border-right:none"></div>
<div class="gv" style="left:296px"></div><div class="gv" style="left:396px"></div><div class="gv" style="left:495px"></div><div class="gv" style="left:595px"></div><div class="gv" style="left:694px"></div><div class="gv" style="left:794px"></div><div class="gv" style="left:893px"></div><div class="gh" style="top:62px;left:297px;width:641px"></div><div class="gh" style="top:93px;left:297px;width:641px"></div><div class="gh" style="top:124px;left:297px;width:641px"></div><div class="gh" style="top:155px;left:297px;width:641px"></div><div class="gh" style="top:186px;left:297px;width:641px"></div><div class="gh" style="top:217px;left:297px;width:641px"></div><div class="gh" style="top:248px;left:297px;width:641px"></div><div class="gh" style="top:279px;left:297px;width:641px"></div><div class="gh" style="top:310px;left:297px;width:641px"></div><div class="gh" style="top:341px;left:297px;width:641px"></div><div class="gh" style="top:372px;left:297px;width:641px"></div><div class="gh" style="top:403px;left:297px;width:641px"></div><div class="gh" style="top:434px;left:297px;width:641px"></div><div class="gh" style="top:465px;left:297px;width:641px"></div><div class="gh" style="top:496px;left:297px;width:641px"></div><div class="gh" style="top:527px;left:297px;width:641px"></div><div class="gh" style="top:558px;left:297px;width:641px"></div><div class="gh" style="top:589px;left:297px;width:641px"></div>
<div class="rh" style="top:32px;"><span class="n">1</span></div><div class="c hd l k" style="left:38px;top:32px;width:90px">日期</div><div class="c hd l k" style="left:128px;top:32px;width:85px">銷項</div><div class="c hd l k" style="left:213px;top:32px;width:84px">金額</div><div class="fb" style="left:116px;top:50.7px"></div><div class="fb" style="left:200.7px;top:50.7px"></div><div class="fb" style="left:284.7px;top:50.7px"></div>
<div class="rh" style="top:63px;"><span class="n">2</span></div><div class="c r band" style="left:38px;top:63px;width:90px"><span class="n nr">2024/1/1</span></div><div class="c l k band" style="left:128px;top:63px;width:85px">加油</div><div class="c r band" style="left:213px;top:63px;width:84px"><span class="n nr">555</span></div>
<div class="rh" style="top:94px;"><span class="n">3</span></div><div class="c r wb" style="left:38px;top:94px;width:90px"><span class="n nr">2024/1/2</span></div><div class="c l k wb" style="left:128px;top:94px;width:85px">文具</div><div class="c r" style="left:213px;top:94px;width:84px"><span class="n nr">666</span></div>
<div class="rh" style="top:125px;"><span class="n">4</span></div><div class="c r band" style="left:38px;top:125px;width:90px"><span class="n nr">2024/1/3</span></div><div class="c l k band" style="left:128px;top:125px;width:85px">餐費</div><div class="c r band" style="left:213px;top:125px;width:84px"><span class="n nr">777</span></div>
<div class="rh" style="top:156px;"><span class="n">5</span></div><div class="c r wb" style="left:38px;top:156px;width:90px"><span class="n nr">2024/1/4</span></div><div class="c l k wb" style="left:128px;top:156px;width:85px">交通</div><div class="c r" style="left:213px;top:156px;width:84px"><span class="n nr">888</span></div>
<div class="rh" style="top:187px;"><span class="n">6</span></div><div class="c r band" style="left:38px;top:187px;width:90px"><span class="n nr">2024/1/5</span></div><div class="c l k band" style="left:128px;top:187px;width:85px">電話</div><div class="c r band" style="left:213px;top:187px;width:84px"><span class="n nr">999</span></div>
<div class="rh" style="top:218px;"><span class="n">7</span></div><div class="c r wb" style="left:38px;top:218px;width:90px"><span class="n nr">2024/1/1</span></div><div class="c l k wb" style="left:128px;top:218px;width:85px">加油</div><div class="c r" style="left:213px;top:218px;width:84px"><span class="n nr">1323</span></div>
<div class="rh" style="top:249px;"><span class="n">8</span></div><div class="c r band" style="left:38px;top:249px;width:90px"><span class="n nr">2024/1/2</span></div><div class="c l k band" style="left:128px;top:249px;width:85px">文具</div><div class="c r band" style="left:213px;top:249px;width:84px"><span class="n nr">223</span></div>
<div class="rh" style="top:280px;"><span class="n">9</span></div><div class="c r wb" style="left:38px;top:280px;width:90px"><span class="n nr">2024/1/3</span></div><div class="c l k wb" style="left:128px;top:280px;width:85px">餐費</div><div class="c r" style="left:213px;top:280px;width:84px"><span class="n nr">432</span></div>
<div class="rh" style="top:311px;"><span class="n">10</span></div><div class="c r band" style="left:38px;top:311px;width:90px"><span class="n nr">2024/1/4</span></div><div class="c l k band" style="left:128px;top:311px;width:85px">交通</div><div class="c r band" style="left:213px;top:311px;width:84px"><span class="n nr">2452</span></div>
<div class="rh" style="top:342px;"><span class="n">11</span></div><div class="c r wb" style="left:38px;top:342px;width:90px"><span class="n nr">2024/1/5</span></div><div class="c l k wb" style="left:128px;top:342px;width:85px">電話</div><div class="c r" style="left:213px;top:342px;width:84px"><span class="n nr">657</span></div>
<div class="rh" style="top:373px;background:#d3d3d3;color:#22694a;border-right:1.300px solid #2a6e48;"><span class="n">12</span></div><div class="c r band" style="left:38px;top:373px;width:90px"><span class="n nr">2024/1/1</span></div><div class="c l k band" style="left:128px;top:373px;width:85px">加油</div><div class="c r band" style="left:213px;top:373px;width:84px"><span class="n nr">1111</span></div>
<div class="rh" style="top:404px;"><span class="n">13</span></div><div class="c r wb" style="left:38px;top:404px;width:90px"><span class="n nr">2024/1/2</span></div><div class="c l k wb" style="left:128px;top:404px;width:85px">文具</div><div class="c r" style="left:213px;top:404px;width:84px"><span class="n nr">1000</span></div>
<div class="rh" style="top:435px;"><span class="n">14</span></div><div class="c r band" style="left:38px;top:435px;width:90px"><span class="n nr">2024/1/3</span></div><div class="c l k band" style="left:128px;top:435px;width:85px">餐費</div><div class="c r band" style="left:213px;top:435px;width:84px"><span class="n nr">999</span></div>
<div class="rh" style="top:466px;"><span class="n">15</span></div><div class="c r wb" style="left:38px;top:466px;width:90px"><span class="n nr">2024/1/4</span></div><div class="c l k wb" style="left:128px;top:466px;width:85px">交通</div><div class="c r" style="left:213px;top:466px;width:84px"><span class="n nr">666</span></div>
<div class="rh" style="top:497px;"><span class="n">16</span></div><div class="c r band" style="left:38px;top:497px;width:90px"><span class="n nr">2024/1/5</span></div><div class="c l k band" style="left:128px;top:497px;width:85px">電話</div><div class="c r band" style="left:213px;top:497px;width:84px"><span class="n nr">555</span></div>
<div class="rh" style="top:528px;"><span class="n">17</span></div><div class="c r wb" style="left:38px;top:528px;width:90px"><span class="n nr">2024/1/1</span></div><div class="c l k wb" style="left:128px;top:528px;width:85px">加油</div><div class="c r" style="left:213px;top:528px;width:84px"><span class="n nr">4563</span></div>
<div class="rh" style="top:559px;"><span class="n">18</span></div><div class="c r band" style="left:38px;top:559px;width:90px"><span class="n nr">2024/1/2</span></div><div class="c l k band" style="left:128px;top:559px;width:85px">文具</div><div class="c r band" style="left:213px;top:559px;width:84px"><span class="n nr">45674</span></div>
<div class="a" style="left:296px;top:372.500px;width:101.500px;height:32.800px;border:1.200px solid #3c8059"></div><div class="a" style="left:394.700px;top:402.500px;width:4.300px;height:4.300px;background:#2f7650;border:.7px solid #fff"></div>
<div class="a" style="left:938px;top:0;width:14px;height:574px;background:#efefef"></div><div class="a" style="left:939.500px;top:.5px;width:11.500px;height:573px;border-radius:5px;background:#f8f8f8"></div><svg style="left:941.800px;top:3.300px" width="7" height="5" viewBox="0 0 7 5"><path d="M0 5L3.500.5 7 5z" fill="#606060"/></svg><div class="a" style="left:942.200px;top:12px;width:6px;height:209px;border-radius:3px;background:#6a6a6a"></div><svg style="left:941.800px;top:566.500px" width="7" height="5" viewBox="0 0 7 5"><path d="M0 0l3.500 4.500L7 0z" fill="#606060"/></svg></div>
<div id="pane" class="a">
<div id="pin"></div>
<div class="t " style="left:7px;top:8.5px;font-size:15.200px;color:#3a3a3a;line-height:20px;height:20px;margin-top:-4px;font-weight:300">查詢與連線</div><svg style="left:205.3px;top:13.3px" width="10" height="6" viewBox="0 0 10 6"><path d="M.5.500L5 5 9.500.500" fill="none" stroke="#444" stroke-width=".9"/></svg><svg style="left:228.8px;top:12.1px" width="7.400" height="7.400" viewBox="0 0 8 8"><path d="M.5.500l7 7M7.500.500l-7 7" fill="none" stroke="#444" stroke-width=".95"/></svg><div class="t " style="left:7px;top:33px;font-weight:700;color:#333;font-size:8.400px">查詢</div><div class="a" style="left:6px;top:47px;width:17px;height:2px;background:#1f7a4a"></div><div class="a" style="left:28.8px;top:32px;width:1px;height:14px;background:#b5b5b5"></div><div class="t " style="left:36.5px;top:33px;color:#666;font-size:8.400px">連線</div><div class="t " style="left:7px;top:54.5px;font-size:7.700px;color:#444">10 個查詢</div><div class="a" style="left:6px;top:67px;width:234px;height:1px;background:#b2b2b2"></div>
<svg style="left:10px;top:80.1px" width="5" height="5" viewBox="0 0 5 5"><path d="M5 0v5H0z" fill="#3a3a3a"/></svg><svg style="left:20px;top:78.8px" width="9.600" height="8" viewBox="0 0 9.600 8"><path d="M0 1.200h5.400l.8-1h3a.4.400 0 0 1 .4.400v7a.4.400 0 0 1-.4.400H.4a.4.400 0 0 1-.4-.400z" fill="#f3ce82"/><path d="M5.600 1.200h4" stroke="#f8e2b0" stroke-width=".8"/></svg><div class="t nm" style="left:33.6px;top:77.6px;margin-top:-1px">A [3]</div><svg style="left:25px;top:98.1px" width="10.600" height="9" viewBox="0 0 10.600 9"><rect x=".4" y=".4" width="9.800" height="8.200" fill="#fff" stroke="#a9a9a9" stroke-width=".7"/><path d="M0 .7h10.600" stroke="#3d6eb6" stroke-width="1.400"/><path d="M3.600 1.500v7M7 1.500v7M.4 3.900h9.800M.4 6.200h9.800" stroke="#cfcfcf" stroke-width=".6"/></svg><div class="t nm" style="left:39px;top:97.6px;margin-top:-1px;word-spacing:-.2px;font-size:9.800px">1月</div><div class="t sub" style="left:39px;top:113.1px;">載入 5 個資料列<span class="dot">。</span></div><svg style="left:25px;top:133.4px" width="10.600" height="9" viewBox="0 0 10.600 9"><rect x=".4" y=".4" width="9.800" height="8.200" fill="#fff" stroke="#a9a9a9" stroke-width=".7"/><path d="M0 .7h10.600" stroke="#3d6eb6" stroke-width="1.400"/><path d="M3.600 1.500v7M7 1.500v7M.4 3.900h9.800M.4 6.200h9.800" stroke="#cfcfcf" stroke-width=".6"/></svg><div class="t nm" style="left:39px;top:132.9px;margin-top:-1px;word-spacing:-.2px;font-size:9.800px">2月</div><div class="t sub" style="left:39px;top:148.4px;">載入 5 個資料列<span class="dot">。</span></div><svg style="left:25px;top:168.7px" width="10.600" height="9" viewBox="0 0 10.600 9"><rect x=".4" y=".4" width="9.800" height="8.200" fill="#fff" stroke="#a9a9a9" stroke-width=".7"/><path d="M0 .7h10.600" stroke="#3d6eb6" stroke-width="1.400"/><path d="M3.600 1.500v7M7 1.500v7M.4 3.900h9.800M.4 6.200h9.800" stroke="#cfcfcf" stroke-width=".6"/></svg><div class="t nm" style="left:39px;top:168.2px;margin-top:-1px;word-spacing:-.2px;font-size:9.800px">3月</div><div class="t sub" style="left:39px;top:183.7px;">載入 5 個資料列<span class="dot">。</span></div>
<svg style="left:10px;top:206px" width="5" height="5" viewBox="0 0 5 5"><path d="M5 0v5H0z" fill="#3a3a3a"/></svg><svg style="left:20px;top:204.7px" width="9.600" height="8" viewBox="0 0 9.600 8"><path d="M0 1.200h5.400l.8-1h3a.4.400 0 0 1 .4.400v7a.4.400 0 0 1-.4.400H.4a.4.400 0 0 1-.4-.400z" fill="#f3ce82"/><path d="M5.600 1.200h4" stroke="#f8e2b0" stroke-width=".8"/></svg><div class="t nm" style="left:33.6px;top:203.5px;margin-top:-1px">B [3]</div><svg style="left:25px;top:224px" width="10.600" height="9" viewBox="0 0 10.600 9"><rect x=".4" y=".4" width="9.800" height="8.200" fill="#fff" stroke="#a9a9a9" stroke-width=".7"/><path d="M0 .7h10.600" stroke="#3d6eb6" stroke-width="1.400"/><path d="M3.600 1.500v7M7 1.500v7M.4 3.900h9.800M.4 6.200h9.800" stroke="#cfcfcf" stroke-width=".6"/></svg><div class="t nm" style="left:39px;top:223.5px;margin-top:-1px;word-spacing:-.2px;font-size:9.800px">1月 (2)</div><div class="t sub" style="left:39px;top:239px;">載入 5 個資料列<span class="dot">。</span></div><svg style="left:25px;top:259.3px" width="10.600" height="9" viewBox="0 0 10.600 9"><rect x=".4" y=".4" width="9.800" height="8.200" fill="#fff" stroke="#a9a9a9" stroke-width=".7"/><path d="M0 .7h10.600" stroke="#3d6eb6" stroke-width="1.400"/><path d="M3.600 1.500v7M7 1.500v7M.4 3.900h9.800M.4 6.200h9.800" stroke="#cfcfcf" stroke-width=".6"/></svg><div class="t nm" style="left:39px;top:258.8px;margin-top:-1px;word-spacing:-.2px;font-size:9.800px">3月 (2)</div><div class="t sub" style="left:39px;top:274.3px;">載入 5 個資料列<span class="dot">。</span></div><svg style="left:25px;top:294.6px" width="10.600" height="9" viewBox="0 0 10.600 9"><rect x=".4" y=".4" width="9.800" height="8.200" fill="#fff" stroke="#a9a9a9" stroke-width=".7"/><path d="M0 .7h10.600" stroke="#3d6eb6" stroke-width="1.400"/><path d="M3.600 1.500v7M7 1.500v7M.4 3.900h9.800M.4 6.200h9.800" stroke="#cfcfcf" stroke-width=".6"/></svg><div class="t nm" style="left:39px;top:294.1px;margin-top:-1px;word-spacing:-.2px;font-size:9.800px">2月 (2)</div><div class="t sub" style="left:39px;top:309.6px;">載入 5 個資料列<span class="dot">。</span></div>
<svg style="left:10px;top:331.9px" width="5" height="5" viewBox="0 0 5 5"><path d="M5 0v5H0z" fill="#3a3a3a"/></svg><svg style="left:20px;top:330.6px" width="9.600" height="8" viewBox="0 0 9.600 8"><path d="M0 1.200h5.400l.8-1h3a.4.400 0 0 1 .4.400v7a.4.400 0 0 1-.4.400H.4a.4.400 0 0 1-.4-.400z" fill="#f3ce82"/><path d="M5.600 1.200h4" stroke="#f8e2b0" stroke-width=".8"/></svg><div class="t nm" style="left:33.6px;top:329.4px;margin-top:-1px">C [3]</div><svg style="left:25px;top:349.9px" width="10.600" height="9" viewBox="0 0 10.600 9"><rect x=".4" y=".4" width="9.800" height="8.200" fill="#fff" stroke="#a9a9a9" stroke-width=".7"/><path d="M0 .7h10.600" stroke="#3d6eb6" stroke-width="1.400"/><path d="M3.600 1.500v7M7 1.500v7M.4 3.900h9.800M.4 6.200h9.800" stroke="#cfcfcf" stroke-width=".6"/></svg><div class="t nm" style="left:39px;top:349.4px;margin-top:-1px;word-spacing:-.2px;font-size:9.800px">2月 (3)</div><div class="t sub" style="left:39px;top:364.9px;">載入 5 個資料列<span class="dot">。</span></div><svg style="left:25px;top:385.2px" width="10.600" height="9" viewBox="0 0 10.600 9"><rect x=".4" y=".4" width="9.800" height="8.200" fill="#fff" stroke="#a9a9a9" stroke-width=".7"/><path d="M0 .7h10.600" stroke="#3d6eb6" stroke-width="1.400"/><path d="M3.600 1.500v7M7 1.500v7M.4 3.900h9.800M.4 6.200h9.800" stroke="#cfcfcf" stroke-width=".6"/></svg><div class="t nm" style="left:39px;top:384.7px;margin-top:-1px;word-spacing:-.2px;font-size:9.800px">3月 (3)</div><div class="t sub" style="left:39px;top:400.2px;">載入 5 個資料列<span class="dot">。</span></div><svg style="left:25px;top:420.5px" width="10.600" height="9" viewBox="0 0 10.600 9"><rect x=".4" y=".4" width="9.800" height="8.200" fill="#fff" stroke="#a9a9a9" stroke-width=".7"/><path d="M0 .7h10.600" stroke="#3d6eb6" stroke-width="1.400"/><path d="M3.600 1.500v7M7 1.500v7M.4 3.900h9.800M.4 6.200h9.800" stroke="#cfcfcf" stroke-width=".6"/></svg><div class="t nm" style="left:39px;top:420px;margin-top:-1px;word-spacing:-.2px;font-size:9.800px">1月 (3)</div><div class="t sub" style="left:39px;top:435.5px;">載入 5 個資料列<span class="dot">。</span></div>
<svg style="left:10px;top:457.8px" width="5" height="5" viewBox="0 0 5 5"><path d="M5 0v5H0z" fill="#3a3a3a"/></svg><svg style="left:20px;top:456.5px" width="9.600" height="8" viewBox="0 0 9.600 8"><path d="M0 1.200h5.400l.8-1h3a.4.400 0 0 1 .4.400v7a.4.400 0 0 1-.4.400H.4a.4.400 0 0 1-.4-.400z" fill="#f3ce82"/><path d="M5.600 1.200h4" stroke="#f8e2b0" stroke-width=".8"/></svg><div class="t nm" style="left:33.6px;top:455.3px;margin-top:-1px">其他查詢 [1]</div><div class="a" style="left:11.5px;top:471.8px;width:228px;height:35px;background:#9fd5b7"></div><svg style="left:228.3px;top:476.2px" width="10" height="11" viewBox="0 0 10 11"><path d="M.3.300h4.700l2.300 2.300v7.800H.3z" fill="#fff"/><path d="M5 .3v2.300h2.300" fill="none" stroke="#cfe8da" stroke-width=".6"/><circle cx="7.500" cy="7.900" r="2" fill="#9fd5b7" stroke="#5fa585" stroke-width=".9"/></svg><svg style="left:25px;top:475.8px" width="10.600" height="9" viewBox="0 0 10.600 9"><rect x=".4" y=".4" width="9.800" height="8.200" fill="#fff" stroke="#a9a9a9" stroke-width=".7"/><path d="M0 .7h10.600" stroke="#3d6eb6" stroke-width="1.400"/><path d="M3.600 1.500v7M7 1.500v7M.4 3.900h9.800M.4 6.200h9.800" stroke="#cfcfcf" stroke-width=".6"/></svg><div class="t nm" style="left:39px;top:475.3px;margin-top:-1px;word-spacing:-.2px;font-size:9.800px">附加1</div><div class="t sub" style="left:39px;top:490.8px;">載入 45 個資料列<span class="dot">。</span></div>
</div>
<div class="a" style="left:941.300px;top:590px;width:182.800px;height:84px;border:4px solid #ea5b51;border-radius:12.500px;box-shadow:.5px 1.500px 2px rgba(0,0,0,.45), inset .5px 1.500px 2px rgba(0,0,0,.4)"></div>
<div id="sheetbar" class="a"><svg style="left:13px;top:7px" width="4" height="7" viewBox="0 0 4 7"><path d="M3.500.500L.5 3.500l3 3" fill="none" stroke="#b0b0b0" stroke-width=".9"/></svg><svg style="left:37px;top:7px" width="4" height="7" viewBox="0 0 4 7"><path d="M.5.500l3 3-3 3" fill="none" stroke="#b0b0b0" stroke-width=".9"/></svg><div class="a" style="left:75.500px;top:0;width:36.500px;height:19px;background:#fff;border-radius:0 0 4px 4px"></div><div class="t" style="left:81px;top:4px;font-size:9.400px;color:#333">附加<span style="font-size:10.500px">1</span></div><div class="a" style="left:81px;top:16px;width:26px;height:1.500px;background:#1f7a4a"></div><div class="a" style="left:115.500px;top:3px;width:1px;height:14px;background:#d0d0d0"></div><div class="t" style="left:125.700px;top:4.500px;font-size:9.400px;color:#444">工作表<span style="font-size:10.500px">1</span></div><div class="a" style="left:168.500px;top:3px;width:1px;height:14px;background:#d0d0d0"></div><svg style="left:198.500px;top:6.500px" width="8" height="8" viewBox="0 0 8 8"><path d="M4 0v8M0 4h8" stroke="#555" stroke-width=".9"/></svg><svg style="left:573px;top:7px" width="2" height="8" viewBox="0 0 2 8"><circle cx="1" cy="1" r=".8" fill="#4a4a4a"/><circle cx="1" cy="4" r=".8" fill="#4a4a4a"/><circle cx="1" cy="7" r=".8" fill="#4a4a4a"/></svg><div class="a" style="left:585px;top:5px;width:355px;height:12px;border-radius:6px;background:#f6f6f6"></div><svg style="left:588px;top:8px" width="5" height="7" viewBox="0 0 5 7"><path d="M5 0L.5 3.500 5 7z" fill="#606060"/></svg><div class="a" style="left:598px;top:8px;width:290px;height:6px;border-radius:3px;background:#6a6a6a"></div><svg style="left:931px;top:8px" width="5" height="7" viewBox="0 0 5 7"><path d="M0 0l4.500 3.500L0 7z" fill="#606060"/></svg></div>
<div id="status" class="a"><div class="t" style="left:7.500px;top:1.7px">就緒</div><svg style="left:37px;top:2.3px" width="11" height="10" viewBox="0 0 11 10" fill="none" stroke="#3a3a3a" stroke-width=".95"><circle cx="4" cy="1.800" r="1.300"/><path d="M.5 3.800h7M4 3.800v2.700M4 6.500L2 9.500M4 6.500l1.200 1.500"/><path d="M7 6.500l3 3M10 6.500l-3 3"/></svg><div class="t" style="left:50.300px;top:1.7px;color:#333;font-weight:500">協助工具: 調查</div><div class="a" style="left:985px;top:0px;width:28px;height:15.500px;background:#dadada"></div><svg style="left:993px;top:3.2px" width="10" height="9" viewBox="0 0 10 9" fill="none" stroke="#333" stroke-width=".8"><rect x=".5" y=".5" width="9" height="8"/><path d="M3.500 .5v8M6.500 .5v8M.5 3.200h9M.5 5.800h9"/></svg><svg style="left:1022px;top:3.2px" width="9" height="9" viewBox="0 0 9 9" fill="none" stroke="#333" stroke-width=".8"><rect x=".5" y=".5" width="8" height="8"/><rect x="2.500" y="2.500" width="4" height="4"/></svg><svg style="left:1050px;top:3.2px" width="10" height="9" viewBox="0 0 10 9" fill="none" stroke="#333" stroke-width=".8"><rect x=".5" y=".5" width="9" height="8"/><path d="M3.500 .5v4.500h3V.5"/></svg><div class="a" style="left:1074px;top:7px;width:5px;height:1px;background:#8a8a8a"></div><div class="a" style="left:1083px;top:7px;width:70px;height:1px;background:#8a8a8a"></div><div class="a" style="left:1117px;top:5px;width:1px;height:5px;background:#8a8a8a"></div><div class="a" style="left:1129.600px;top:3.3px;width:2.800px;height:8.400px;background:#4a4a4a"></div><svg style="left:1156px;top:4.5px" width="6" height="6" viewBox="0 0 6 6"><path d="M3 0v6M0 3h6" stroke="#8a8a8a" stroke-width=".8"/></svg><div class="t" style="left:1171.500px;top:1.7px;font-family:'Liberation Sans',sans-serif;font-size:8.600px;color:#444">220%</div></div>
<div id="bstrip" class="a"></div>
<div class="a" style="left:1198.300px;top:32px;width:1.700px;height:735px;background:#bbbbbc"></div><div class="a" style="left:1198.800px;top:0;width:1.200px;height:32px;background:#cfe0d6"></div>
</div>
</body></html>
